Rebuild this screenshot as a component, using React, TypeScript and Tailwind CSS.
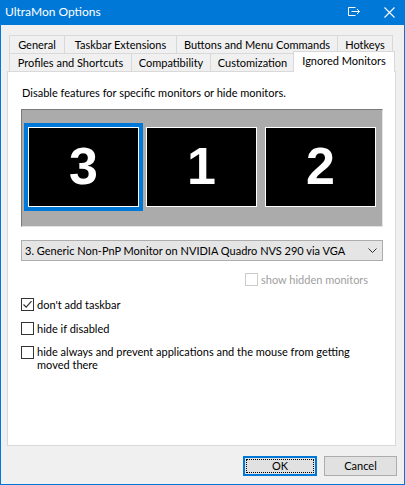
import React from "react";

const font = { fontFamily: 'Lato, "Noto Sans", sans-serif' };

function Tab({ label, w, last }: { label: string; w: string; last?: boolean }) {
  return (
    <div
      className={`${w} h-full border-t border-l ${last ? "border-r" : ""} border-[#d9d9d9] bg-[#f0f0f0] flex items-center justify-center text-[11px] text-black leading-none whitespace-nowrap`}
    >
      {label}
    </div>
  );
}

function Monitor({ n, selected, ml }: { n: string; selected?: boolean; ml: string }) {
  return (
    <div className={`${ml} w-[111px] h-[80px] shrink-0 border border-white bg-black flex items-center justify-center ${selected ? "outline-4 outline-[#0078d7]" : ""}`}>
      <span
        className="text-white font-bold text-[52px] leading-none -mt-[3px]"
        style={{ fontFamily: '"Liberation Sans", Arial, sans-serif' }}
      >
        {n}
      </span>
    </div>
  );
}

function Check({ checked, disabled }: { checked?: boolean; disabled?: boolean }) {
  return (
    <div
      className={`w-[13px] h-[13px] shrink-0 border ${disabled ? "border-[#cccccc]" : "border-[#333333]"} bg-white flex items-center justify-center`}
    >
      {checked && (
        <svg width="11" height="11" viewBox="0 0 11 11">
          <path d="M1.5 5.5 L4.2 8.2 L9.5 2.2" fill="none" stroke="#333" strokeWidth="1.2" />
        </svg>
      )}
    </div>
  );
}

export default function App() {
  return (
    <div className="w-[405px] h-[485px] bg-[#0078d7] px-px pb-px flex flex-col text-black" style={font}>
      {/* Title bar */}
      <div className="h-[25px] shrink-0 flex items-center text-white">
        <span className="pl-[4px] text-[12px] leading-none -mt-[1px]">UltraMon Options</span>
        <div className="ml-auto flex items-center">
          <svg width="14" height="10" viewBox="0 0 14 10" className="mr-[22px] -mt-[1px]">
            <path d="M7.5 0.5 H0.5 V8.5 H7.5 M3.5 4.5 H11.5 M9 2 L11.5 4.5 L9 7" fill="none" stroke="white" strokeWidth="1" />
          </svg>
          <svg width="11" height="11" viewBox="0 0 11 11" className="mr-[9px]">
            <path d="M0.5 0.5 L10.5 10.5 M10.5 0.5 L0.5 10.5" stroke="white" strokeWidth="1.1" />
          </svg>
        </div>
      </div>

      {/* Body */}
      <div className="flex-1 bg-[#f0f0f0] flex flex-col pt-[10px]">
        {/* Tabs */}
        <div className="ml-[8px] flex flex-col">
          <div className="flex h-[18px]">
            <Tab label="General" w="w-[55px]" />
            <Tab label="Taskbar Extensions" w="w-[112px]" />
            <Tab label="Buttons and Menu Commands" w="w-[161px]" />
            <Tab label="Hotkeys" w="w-[56px]" last />
          </div>
          <div className="flex h-[18px]">
            <Tab label="Profiles and Shortcuts" w="w-[122px]" />
            <Tab label="Compatibility" w="w-[79px]" />
            <Tab label="Customization" w="w-[84px]" />
            <div className="relative z-10 w-[102px] h-[21px] -mt-[2px] -ml-px border-t border-l border-r border-[#d9d9d9] bg-white flex justify-center text-[11px] leading-none pt-[3px] whitespace-nowrap">
              Ignored Monitors
            </div>
          </div>
        </div>

        {/* Panel */}
        <div className="ml-[6px] w-[389px] h-[375px] border border-[#d9d9d9] bg-white flex flex-col pl-[14px] pr-[11px]">
          <div className="text-[11px] leading-none mt-[15px] whitespace-nowrap">Disable features for specific monitors or hide monitors.</div>

          <div className="mt-[11px] -ml-[1px] w-[362px] h-[118px] bg-[#ababab] border-t border-l border-[#7a7a7a] border-r border-b border-r-[#e3e3e3] border-b-[#e3e3e3] flex pt-[17px] pl-[6px]">
            <Monitor n="3" selected ml="ml-0" />
            <Monitor n="1" ml="ml-[7px]" />
            <Monitor n="2" ml="ml-[8px]" />
          </div>

          <div className="mt-[13px] -ml-[1px] w-[362px] h-[21px] bg-[#e5e5e5] border border-[#adadad] flex items-center pl-[3px] pr-[5px] text-[11px] leading-none whitespace-nowrap">
            <span className="-mt-px">3. Generic Non-PnP Monitor on NVIDIA Quadro NVS 290 via VGA</span>
            <svg width="9" height="5" viewBox="0 0 9 5" className="ml-auto">
              <path d="M0.5 0.5 L4.5 4.5 L8.5 0.5" fill="none" stroke="#333" strokeWidth="1" />
            </svg>
          </div>

          <div className="mt-[12px] ml-[223px] flex items-center gap-[3px] text-[11px] leading-none text-[#a0a0a0] whitespace-nowrap">
            <Check disabled />
            <span className="-mt-px">show hidden monitors</span>
          </div>

          <div className="mt-[12px] -ml-[1px] flex items-center gap-[3px] text-[11px] leading-none">
            <Check checked />
            <span className="-mt-px">don't add taskbar</span>
          </div>

          <div className="mt-[11px] -ml-[1px] flex items-center gap-[3px] text-[11px] leading-none">
            <Check />
            <span className="-mt-px">hide if disabled</span>
          </div>

          <div className="mt-[11px] -ml-[1px] flex items-start gap-[3px] text-[11px] leading-[13px] whitespace-nowrap">
            <Check />
            <span className="-mt-px">hide always and prevent applications and the mouse from getting<br />moved there</span>
          </div>
        </div>

        {/* Buttons */}
        <div className="mt-[10px] flex justify-end pr-[7px] gap-[7px]">
          <div className="w-[74px] h-[20px] border-2 border-[#0078d7] bg-[#e1e1e1] p-px">
            <div className="w-full h-full border border-dotted border-black flex items-center justify-center text-[11px] leading-none">
              <span className="-mt-px">OK</span>
            </div>
          </div>
          <div className="w-[73px] h-[20px] border border-[#adadad] bg-[#e1e1e1] flex items-center justify-center text-[11px] leading-none">
            <span className="-mt-px">Cancel</span>
          </div>
        </div>
      </div>
    </div>
  );
}
